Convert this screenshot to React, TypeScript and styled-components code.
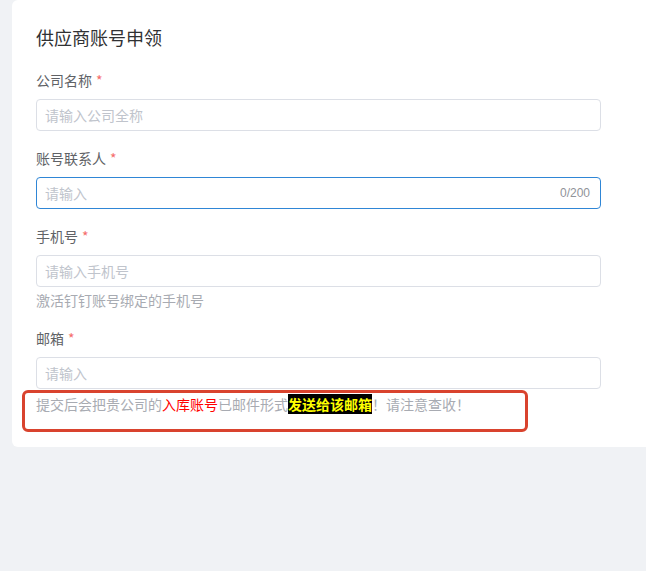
import React, { FC, ReactNode } from 'react';
import styled, { createGlobalStyle, css } from 'styled-components';

const GlobalStyle = createGlobalStyle`
  html, body {
    margin: 0;
    padding: 0;
    background: #f0f2f5;
  }
  body {
    font-family: "Noto Sans CJK SC", "Microsoft YaHei", "Noto Sans", sans-serif;
    -webkit-font-smoothing: antialiased;
  }
  * {
    box-sizing: border-box;
  }
`;

const Page = styled.div`
  min-height: 571px;
  padding-left: 12px;
  background: #f0f2f5;
`;

const Card = styled.div`
  background: #ffffff;
  border-radius: 6px 0 0 6px;
  padding: 24px 0 32px 24px;
`;

const Title = styled.h3`
  margin: 0 0 19px;
  font-size: 18px;
  line-height: 26px;
  font-weight: 400;
  color: #303133;
`;

const Form = styled.form`
  width: 565px;
  display: flex;
  flex-direction: column;
`;

const FormItem = styled.div`
  display: flex;
  flex-direction: column;
  margin-bottom: 16px;
`;

const Label = styled.label`
  font-size: 14px;
  line-height: 22px;
  color: #606266;
  margin-bottom: 8px;
`;

const Required = styled.span`
  color: #f56c6c;
  margin-left: 4px;
`;

const InputWrap = styled.div<{ $focused?: boolean }>`
  height: 32px;
  display: flex;
  align-items: center;
  padding: 0 10px 0 8px;
  border: 1px solid #dcdfe6;
  border-radius: 4px;
  background: #fff;
  ${(p) =>
    p.$focused &&
    css`
      border-color: #2f86d6;
    `}
`;

const Input = styled.input`
  flex: 1;
  min-width: 0;
  border: none;
  outline: none;
  background: transparent;
  font-family: inherit;
  font-size: 14px;
  color: #606266;
  padding: 0;

  &::placeholder {
    color: #c0c4cc;
  }
`;

const Counter = styled.span`
  font-size: 12px;
  color: #909399;
  font-family: "Liberation Sans", Arial, sans-serif;
`;

const Help = styled.div`
  font-size: 14px;
  line-height: 22px;
  padding-top: 2px;
  color: #a8abb2;
`;

const Note = styled.div`
  position: relative;
  margin-top: -12px;
  font-size: 14px;
  line-height: 22px;
  color: #a8abb2;
  white-space: nowrap;
`;

const Outline = styled.span`
  position: absolute;
  left: -14px;
  top: -3px;
  width: 506px;
  height: 42px;
  border: 3px solid #d9432e;
  border-radius: 6px;
  pointer-events: none;
`;

const Red = styled.span`
  color: #f00;
`;

const Highlight = styled.span`
  background: #000;
  color: #ffff00;
  font-weight: 700;
`;

const Field: FC<{
  label: string;
  placeholder: string;
  focused?: boolean;
  counter?: string;
  help?: ReactNode;
}> = ({ label, placeholder, focused, counter, help }) => (
  <FormItem>
    <Label>
      {label}
      <Required>*</Required>
    </Label>
    <InputWrap $focused={focused}>
      <Input placeholder={placeholder} />
      {counter ? <Counter>{counter}</Counter> : undefined}
    </InputWrap>
    {help ? <Help>{help}</Help> : undefined}
  </FormItem>
);

export default function App() {
  return (
    <>
      <GlobalStyle />
      <Page>
        <Card>
          <Title>供应商账号申领</Title>
          <Form onSubmit={(e) => e.preventDefault()}>
            <Field label="公司名称" placeholder="请输入公司全称" />
            <Field label="账号联系人" placeholder="请输入" focused counter="0/200" />
            <Field label="手机号" placeholder="请输入手机号" help="激活钉钉账号绑定的手机号" />
            <Field label="邮箱" placeholder="请输入" />
            <Note>
              提交后会把贵公司的<Red>入库账号</Red>已邮件形式
              <Highlight>发送给该邮箱</Highlight>！请注意查收！
              <Outline />
            </Note>
          </Form>
        </Card>
      </Page>
    </>
  );
}
